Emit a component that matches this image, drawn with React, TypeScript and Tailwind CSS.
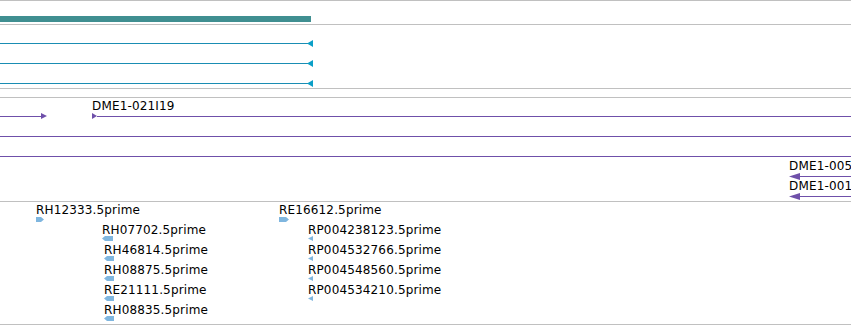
import React from "react";

const SEP = "border-t border-[#c0c0c0]";
const BLUE = "#1a8db3";
const CYAN = "#0b9fc7";
const PURPLE = "#6f50aa";
const EST = "#7fb6df";

type Dir = "left" | "right";

function Head({ w, h, dir, color, className = "" }: { w: number; h: number; dir: Dir; color: string; className?: string }) {
  const pts = dir === "left" ? `0,${h / 2} ${w},0 ${w},${h}` : `0,0 ${w},${h / 2} 0,${h}`;
  return (
    <svg className={`block shrink-0 ${className}`} width={w} height={h}>
      <polygon points={pts} fill={color} />
    </svg>
  );
}

// EST five-prime arrow: short block with a pointed end
function EstArrow({ w, dir }: { w: number; dir: Dir }) {
  const h = 5;
  const pts =
    dir === "left"
      ? `0,${h / 2} 3,0 ${w},0 ${w},${h} 3,${h}`
      : `0,0 ${w - 3},0 ${w},${h / 2} ${w - 3},${h} 0,${h}`;
  return (
    <svg className="block" width={w} height={h}>
      <polygon points={pts} fill={EST} />
    </svg>
  );
}

function Label({ text }: { text: string }) {
  return <div className="h-[12px] whitespace-nowrap text-[12px] leading-[12px] tracking-[0.15px] text-black">{text}</div>;
}

type EstItem = { text: string; arrow: React.ReactNode; className?: string };

// a stack of EST features, one row per 20px
function EstStack({ items, className }: { items: EstItem[]; className: string }) {
  return (
    <div className={`absolute flex flex-col gap-[3px] ${className}`}>
      {items.map((it) => (
        <div key={it.text} className={`flex flex-col ${it.className ?? ""}`}>
          <Label text={it.text} />
          {it.arrow}
        </div>
      ))}
    </div>
  );
}

// purple clone with label and left arrow, running off the right edge
function Clone({ text }: { text: string }) {
  return (
    <div className="flex flex-col">
      <Label text={text} />
      <div className="mt-[1px] flex h-[7px] items-center">
        <Head w={11} h={7} dir="left" color={PURPLE} />
        <div className="h-px flex-1 bg-[#6f50aa]" />
      </div>
    </div>
  );
}

export default function App() {
  return (
    <div className="w-[851px] h-[326px] bg-white overflow-hidden font-['DejaVu_Sans',sans-serif]">
      {/* gene span */}
      <div className={`h-[24px] pt-[15px] ${SEP}`}>
        <div className="h-[6px] w-[311px] bg-[#408f91]" />
      </div>

      {/* transcripts */}
      <div className={`flex h-[64px] flex-col gap-[13px] pt-[15px] ${SEP}`}>
        {[0, 1, 2].map((i) => (
          <div key={i} className="flex h-[7px] w-[313px] items-center">
            <div className="h-px flex-1" style={{ background: BLUE }} />
            <Head w={6} h={7} dir="left" color={CYAN} className="-ml-[4px]" />
          </div>
        ))}
      </div>

      <div className={`h-[9px] ${SEP}`} />

      {/* clones */}
      <div className={`relative h-[104px] overflow-hidden ${SEP}`}>
        <div className="absolute left-0 right-0 top-[2px] flex">
          <div className="mt-[13px] flex h-[6px] w-[47px] items-center">
            <div className="h-px flex-1 bg-[#6f50aa]" />
            <Head w={6} h={6} dir="right" color={PURPLE} className="-ml-[3px]" />
          </div>
          <div className="ml-[45px] flex flex-1 flex-col">
            <Label text="DME1-021I19" />
            <div className="mt-[1px] flex h-[6px] items-center">
              <Head w={5} h={6} dir="right" color={PURPLE} />
              <div className="h-px flex-1 bg-[#6f50aa]" />
            </div>
          </div>
        </div>
        <div className="absolute left-0 right-0 top-[38px] flex flex-col gap-[19px]">
          <div className="h-px bg-[#6f50aa]" />
          <div className="h-px bg-[#6f50aa]" />
        </div>
        <div className="absolute left-[789px] right-0 top-[62px] flex flex-col">
          <Clone text="DME1-005" />
          <Clone text="DME1-001" />
        </div>
      </div>

      {/* ESTs */}
      <div className={`relative h-[124px] border-b border-b-[#c0c0c0] ${SEP}`}>
        <EstStack
          className="left-[36px] top-[2px]"
          items={[{ text: "RH12333.5prime", arrow: <div className="mt-px"><EstArrow w={8} dir="right" /></div> }]}
        />
        <EstStack
          className="left-[102px] top-[22px]"
          items={[
            { text: "RH07702.5prime", arrow: <EstArrow w={11} dir="left" /> },
            { text: "RH46814.5prime", arrow: <EstArrow w={10} dir="left" />, className: "ml-[2px]" },
            { text: "RH08875.5prime", arrow: <EstArrow w={10} dir="left" />, className: "ml-[2px]" },
            { text: "RE21111.5prime", arrow: <EstArrow w={10} dir="left" />, className: "ml-[2px]" },
            { text: "RH08835.5prime", arrow: <EstArrow w={10} dir="left" />, className: "ml-[2px]" },
          ]}
        />
        <EstStack
          className="left-[279px] top-[2px]"
          items={[{ text: "RE16612.5prime", arrow: <div className="mt-px"><EstArrow w={10} dir="right" /></div> }]}
        />
        <EstStack
          className="left-[308px] top-[22px]"
          items={["RP004238123.5prime", "RP004532766.5prime", "RP004548560.5prime", "RP004534210.5prime"].map((t) => ({
            text: t,
            arrow: <Head w={5} h={5} dir="left" color={EST} />,
          }))}
        />
      </div>
    </div>
  );
}
